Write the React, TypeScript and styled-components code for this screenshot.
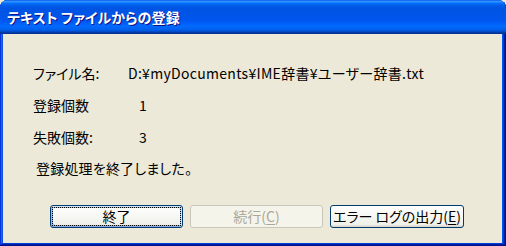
import React from 'react';
import styled, { createGlobalStyle } from 'styled-components';

const GlobalStyle = createGlobalStyle`
  html, body {
    margin: 0;
    padding: 0;
    background: #ece9d8;
  }
`;

const Window = styled.div`
  width: 506px;
  height: 246px;
  display: flex;
  flex-direction: column;
  border-radius: 8px 8px 0 0;
  overflow: hidden;
  background: #0055ea;
  box-shadow: inset -1px -1px #00138c, inset 1px 0 #0831d9, inset -2px -2px #001ea0,
    inset 2px 0 #166aee, inset -3px -3px #003bda, inset 3px 0 #0855dd;
  font-family: 'Noto Sans CJK JP', 'Liberation Sans', sans-serif;
  font-feature-settings: 'palt';
`;

const TitleBar = styled.div`
  height: 34px;
  flex: none;
  display: flex;
  align-items: center;
  padding: 0 0 1px 7px;
  box-sizing: border-box;
  background: linear-gradient(
    to bottom,
    #0058ee 0%,
    #3593ff 4%,
    #288eff 6%,
    #127dff 8%,
    #036ffc 10%,
    #0262ee 14%,
    #0057e5 20%,
    #0054e3 24%,
    #0055eb 56%,
    #005bf5 66%,
    #026afe 76%,
    #0062ef 86%,
    #0052d6 92%,
    #0040ab 94%,
    #003092 100%
  );
`;

const Title = styled.span`
  color: #fff;
  font-size: 14px;
  font-weight: bold;
  letter-spacing: 0.1px;
  text-shadow: 1px 1px #0f1089;
`;

const Body = styled.div`
  flex: 1;
  margin: 0 4px 3px 3px;
  background: #ece9d8;
  padding: 23px 0 0 30px;
  display: flex;
  flex-direction: column;
  color: #000;
  font-size: 14px;
`;

const Row = styled.div<{ $h: number }>`
  height: ${(p) => p.$h}px;
  display: flex;
  align-items: center;
`;

const Label = styled.span`
  width: 95px;
  flex: none;
`;

const Value = styled.span<{ $indent?: number }>`
  padding-left: ${(p) => p.$indent || 0}px;
  letter-spacing: 0.3px;
`;

const Message = styled.div`
  height: 30px;
  display: flex;
  align-items: center;
  padding-left: 3px;
  letter-spacing: 0.2px;
`;

const ButtonRow = styled.div`
  display: flex;
  gap: 7px;
  margin-top: 22px;
  padding-left: 17px;
`;

const Button = styled.button<{ $default?: boolean }>`
  width: 133px;
  height: 23px;
  box-sizing: border-box;
  padding: 0;
  border: 1px solid #003c74;
  border-radius: 3px;
  background: linear-gradient(to bottom, #ffffff 0%, #f0f0ea 88%, #d6d0c5 100%);
  font-family: inherit;
  font-feature-settings: 'palt';
  font-size: 14px;
  line-height: 19px;
  color: #000;
  white-space: nowrap;
  box-shadow: ${(p) =>
    p.$default
      ? 'inset -1px 1px #cee7ff, inset 1px 2px #98b8ea, inset -2px 2px #bcd4f6, inset 1px -1px #89ade4, inset 2px -2px #89ade4'
      : 'none'};
  outline: ${(p) => (p.$default ? '1px dotted #000' : 'none')};
  outline-offset: -3px;

  &:disabled {
    border-color: #c9c7ba;
    background: #f5f4ea;
    color: #aca899;
  }

  u {
    text-decoration-thickness: 1px;
    text-underline-offset: 2px;
  }
`;

const WideButton = styled(Button)`
  width: 134px;
  letter-spacing: 0;
`;

export default function App() {
  return (
    <>
      <GlobalStyle />
      <Window>
        <TitleBar>
          <Title>テキスト ファイルからの登録</Title>
        </TitleBar>
        <Body>
          <Row $h={32}>
            <Label>ファイル名:</Label>
            <Value>D:¥myDocuments¥IME辞書¥ユーザー辞書.txt</Value>
          </Row>
          <Row $h={32}>
            <Label>登録個数</Label>
            <Value $indent={11}>1</Value>
          </Row>
          <Row $h={32}>
            <Label>失敗個数:</Label>
            <Value $indent={11}>3</Value>
          </Row>
          <Message>登録処理を終了しました。</Message>
          <ButtonRow>
            <Button $default>終了</Button>
            <Button disabled>
              続行(<u>C</u>)
            </Button>
            <WideButton>
              エラー ログの出力(<u>E</u>)
            </WideButton>
          </ButtonRow>
        </Body>
      </Window>
    </>
  );
}
